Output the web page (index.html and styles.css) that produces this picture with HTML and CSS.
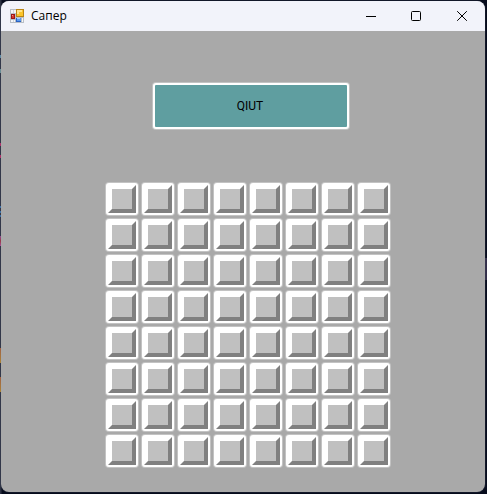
FILE: index.html
```
<!DOCTYPE html>
<html lang="ru">
<head>
<meta charset="utf-8">
<title>Сапер</title>
<link rel="stylesheet" href="styles.css">
</head>
<body>
<div class="window">
  <header class="titlebar">
    <svg class="app-icon" width="14" height="14" viewBox="0 0 14 14" shape-rendering="crispEdges" aria-hidden="true">
      <path fill="#b9bec6" d="M0 0h14v14H0z"/>
      <path fill="#f4f6f9" d="M1 1h5v3H1zM1 11h4v2H1zM12 9h1v4h-1z"/>
      <path fill="#d3d7dd" d="M3 1h1v3H3zM3 11h1v2H3z"/>
      <path fill="#b98516" d="M6 0h8v8H6z"/>
      <path fill="#fbc52c" d="M7 1h6v6H7z"/>
      <path fill="#ffe38a" d="M7 1h5v2H9v2H7z"/>
      <path fill="#9c1717" d="M1 5h4v5H1z"/>
      <path fill="#d8372c" d="M2 6h2v3H2z"/>
      <path fill="#f19a86" d="M2 6h1v1H2z"/>
      <path fill="#2a62c4" d="M6 9h5v4H6z"/>
      <path fill="#5b9bf0" d="M7 9h4v3H7z"/>
      <path fill="#a5ceff" d="M7 9h3v1H7z"/>
    </svg>
    <h1 class="caption">Сапер</h1>
    <div class="controls">
      <button class="control" type="button" aria-label="Свернуть">
        <svg width="11" height="11" viewBox="0 0 11 11"><path d="M1 5.5h10"/></svg>
      </button>
      <button class="control" type="button" aria-label="Развернуть">
        <svg width="11" height="11" viewBox="0 0 11 11"><rect x=".5" y=".5" width="9" height="9" rx="1"/></svg>
      </button>
      <button class="control" type="button" aria-label="Закрыть">
        <svg width="11" height="11" viewBox="0 0 11 11"><path d="M.2.2l9.6 9.6M9.8.2L.2 9.8"/></svg>
      </button>
    </div>
  </header>
  <main class="client">
    <button class="quit" type="button">QIUT</button>
    <div class="board" id="board"></div>
  </main>
</div>
<script src="board.js"></script>
</body>
</html>
```
FILE: styles.css
```
*,
*::before {
  box-sizing: border-box;
}

body {
  margin: 0;
  min-height: 100vh;
  padding: 1px 2px 2px 1px;
  display: flex;
  background:
    linear-gradient(#5f91ad, #5f91ad) 0 55px / 1px 3px no-repeat,
    linear-gradient(#6c969c, #6c969c) 0 69px / 1px 4px no-repeat,
    linear-gradient(#bd2b69, #bd2b69) 0 143px / 1px 3px no-repeat,
    linear-gradient(#bd2b69, #bd2b69) 0 155px / 1px 3px no-repeat,
    linear-gradient(#3774ae, #3774ae) 0 206px / 1px 2px no-repeat,
    linear-gradient(#3774ae, #3774ae) 0 211px / 1px 2px no-repeat,
    linear-gradient(#3774ae, #3774ae) 0 215px / 1px 2px no-repeat,
    linear-gradient(#984b9d, #a4343d, #b750a2) 0 236px / 1px 10px no-repeat,
    linear-gradient(#ad623d, #b98a2d) 0 348px / 1px 15px no-repeat,
    linear-gradient(#ad623d, #b98a2d) 0 377px / 1px 15px no-repeat,
    linear-gradient(#322d48, #322d48) 100% 258px / 2px 22px no-repeat,
    linear-gradient(90deg, #2c3142 1px, #060b1c 2px);
}

.window {
  flex: 1;
  display: flex;
  flex-direction: column;
  overflow: hidden;
  border-radius: 8px;
  background: #a9a9a9;
  box-shadow: 0 0 0 1px rgba(90, 96, 114, 0.15);
}

.titlebar {
  display: flex;
  align-items: center;
  height: 30px;
  padding-left: 9px;
  background: #f2f3fa;
}

.caption {
  flex: 1;
  margin: 0 0 0 7px;
  font: 12px/16px "Open Sans", "Noto Sans", sans-serif;
  color: #000;
}

.controls {
  display: flex;
}

.control {
  display: grid;
  place-items: center;
  width: 46px;
  height: 30px;
  padding: 0;
  border: 0;
  background: none;
}

.control svg {
  fill: none;
  stroke: #000;
  stroke-width: 1;
}

.client {
  flex: 1;
  display: flex;
  flex-direction: column;
  align-items: center;
  gap: 54px;
  padding: 52px 0 24px 10px;
}

.quit {
  width: 196px;
  height: 46px;
  margin-left: 6px;
  padding: 0 2px 0 0;
  border: 2px solid #fff;
  border-radius: 3px;
  background: #5f9ea0;
  font: 12px/16px Roboto, "Liberation Sans", sans-serif;
  color: #000;
  box-shadow: 0 0 0 1px rgba(255, 255, 255, 0.3);
}

.board {
  display: grid;
  grid-template-columns: repeat(8, 32px);
  gap: 4px;
}

.cell {
  width: 32px;
  height: 32px;
  padding: 0;
  border: 2px solid #fff;
  border-radius: 3px;
  background: #fff;
  box-shadow: 0 0 0 1px rgba(255, 255, 255, 0.3);
}

.cell::before {
  content: "";
  display: block;
  height: 28px;
  border: 4px solid;
  border-color: #fff #808080 #808080 #fff;
  background: #c0c0c0;
}
```
FILE: board.js
```
const size = 8;
const board = document.getElementById("board");

for (let i = 0; i < size * size; i++) {
  const cell = document.createElement("button");
  cell.type = "button";
  cell.className = "cell";
  cell.setAttribute("aria-label", `${Math.floor(i / size) + 1}, ${(i % size) + 1}`);
  board.append(cell);
}
```
